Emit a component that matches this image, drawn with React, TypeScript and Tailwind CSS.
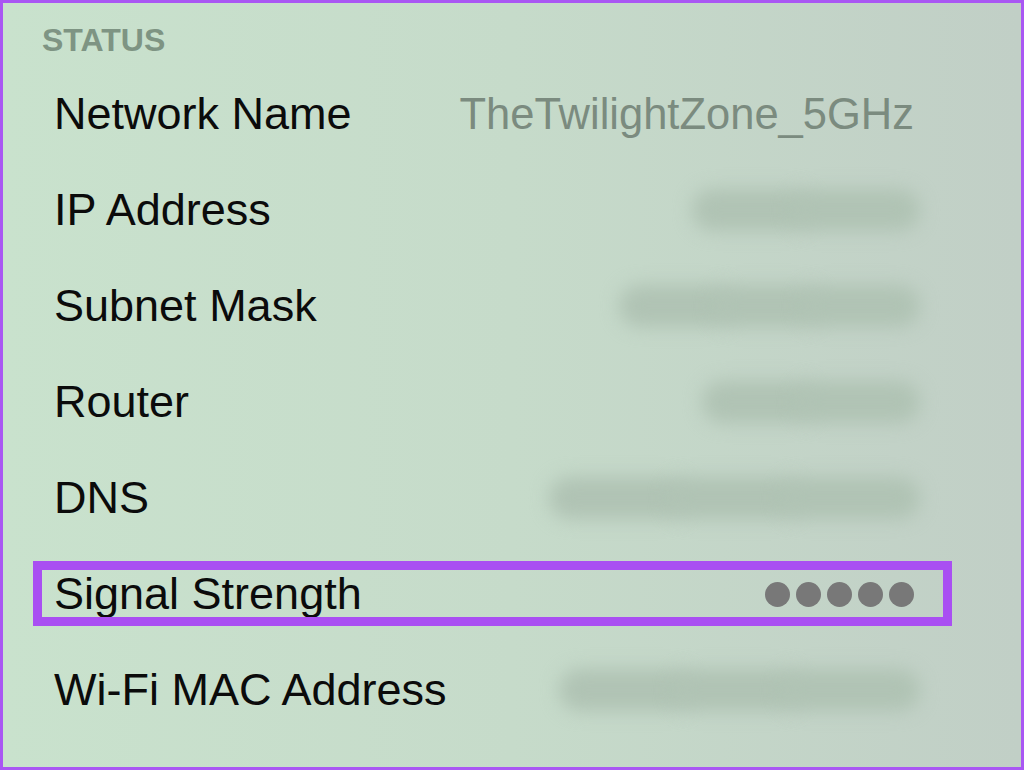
import React from 'react';

type Row = {
  label: string;
  value?: string;
  blur?: number[];
  signal?: boolean;
};

const rows: Row[] = [
  { label: 'Network Name', value: 'TheTwilightZone_5GHz' },
  { label: 'IP Address', blur: [120, 130] },
  { label: 'Subnet Mask', blur: [115, 110, 120] },
  { label: 'Router', blur: [115, 125] },
  { label: 'DNS', blur: [140, 135, 140] },
  { label: 'Signal Strength', signal: true },
  { label: 'Wi-Fi MAC Address', blur: [135, 130, 140] },
];

// smudged value, the way the screenshot hides it
const Smudge: React.FC<{ parts: number[] }> = ({ parts }) => (
  <div className="flex items-center -mr-[6px]">
    {parts.map((w, i) => (
      <div
        key={i}
        className="h-[42px] -ml-[22px] rounded-full bg-[#b0c3b4] blur-[9px]"
        style={{ width: w }}
      />
    ))}
  </div>
);

const Dots: React.FC = () => (
  <div className="flex items-center gap-[6px]">
    {[0, 1, 2, 3, 4].map((i) => (
      <span key={i} className="block h-[25px] w-[25px] rounded-full bg-[#787878]" />
    ))}
  </div>
);

export default function App() {
  return (
    <div
      className="h-[770px] w-[1024px] overflow-hidden border-[3px] border-[#a957f3] bg-gradient-to-r from-[#c9e2cd] via-[#c6dbca] to-[#c1cfc6] pt-[21px]"
      style={{ fontFamily: '"Liberation Sans", Arial, sans-serif' }}
    >
      <div className="pl-[39px] text-[32px] font-bold leading-[32px] text-[#7e9483]">STATUS</div>

      <div className="mt-[10px]">
        {rows.map((row) => (
          <div
            key={row.label}
            className="relative flex h-[96px] items-center justify-between pl-[51px] pr-[107px]"
          >
            <span className="text-[45px] leading-[44px] text-[#0b0b0b]">{row.label}</span>
            {row.value && (
              <span className="text-[43.5px] leading-[44px] text-[#7b8b7f]">{row.value}</span>
            )}
            {row.blur && <Smudge parts={row.blur} />}
            {row.signal && <Dots />}
            {row.signal && (
              <div className="pointer-events-none absolute left-[30px] right-[69px] top-[15px] bottom-[16px] border-[9px] border-[#a94ff2]" />
            )}
          </div>
        ))}
      </div>
    </div>
  );
}
